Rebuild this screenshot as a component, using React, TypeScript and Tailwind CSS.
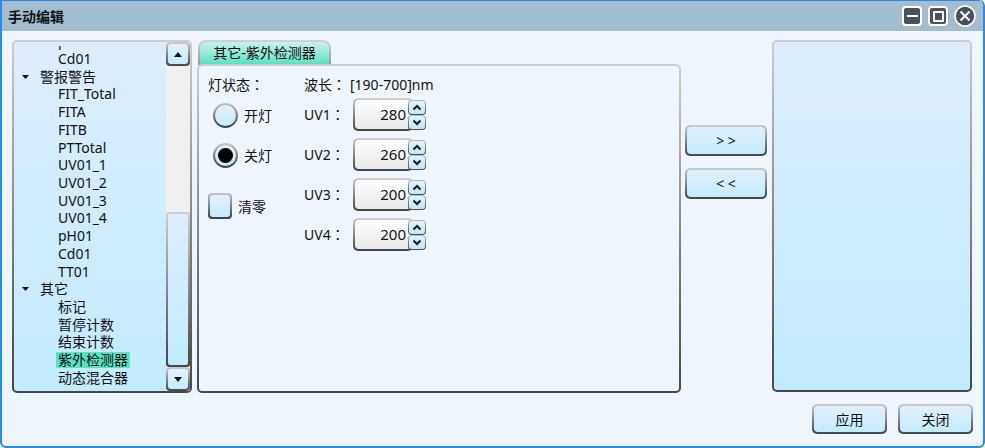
import React from "react";

const FONT = { fontFamily: '"Noto Sans", "Noto Sans CJK SC", sans-serif' };
const CJK = { fontFamily: '"Noto Sans CJK TC", sans-serif' };

const treeItems: { label: string; level: number; selected?: boolean }[] = [
  { label: "pH01", level: 1 },
  { label: "Cd01", level: 1 },
  { label: "警报警告", level: 0 },
  { label: "FIT_Total", level: 1 },
  { label: "FITA", level: 1 },
  { label: "FITB", level: 1 },
  { label: "PTTotal", level: 1 },
  { label: "UV01_1", level: 1 },
  { label: "UV01_2", level: 1 },
  { label: "UV01_3", level: 1 },
  { label: "UV01_4", level: 1 },
  { label: "pH01", level: 1 },
  { label: "Cd01", level: 1 },
  { label: "TT01", level: 1 },
  { label: "其它", level: 0 },
  { label: "标记", level: 1 },
  { label: "暂停计数", level: 1 },
  { label: "结束计数", level: 1 },
  { label: "紫外检测器", level: 1, selected: true },
  { label: "动态混合器", level: 1 },
];

const uvValues = [
  { label: "UV1", value: "280" },
  { label: "UV2", value: "260" },
  { label: "UV3", value: "200" },
  { label: "UV4", value: "200" },
];

// full-width colon, drawn in a face that centres it in its em box
const Colon = () => <span style={CJK}>：</span>;

const Caret = ({ down }: { down?: boolean }) => (
  <svg width="8" height="5" viewBox="0 0 8 5">
    {down ? (
      <path d="M0 0 L8 0 L4 5 Z" fill="#111" />
    ) : (
      <path d="M0 5 L8 5 L4 0 Z" fill="#111" />
    )}
  </svg>
);

const Chevron = ({ down }: { down?: boolean }) => (
  <svg width="10" height="7" viewBox="0 0 10 7">
    <path
      d={down ? "M1.5 1.5 L5 5 L8.5 1.5" : "M1.5 5.5 L5 2 L8.5 5.5"}
      stroke="#1a1a1a"
      strokeWidth="2"
      fill="none"
    />
  </svg>
);

const ScrollButton = ({ down }: { down?: boolean }) => (
  <div className="h-[24px] w-full rounded-[4px] bg-linear-to-b from-[#cfcfcf] to-[#474747] p-[2px]">
    <div className="flex h-full w-full items-center justify-center rounded-[3px] bg-linear-to-b from-[#e4f1fd] to-[#c3ecfe]">
      <Caret down={down} />
    </div>
  </div>
);

const SpinButton = ({ down }: { down?: boolean }) => (
  <div className="h-[15px] w-[18px] rounded-[4px] bg-linear-to-b from-[#bdbdbd] to-[#4a4a4a] p-[1px]">
    <div className="flex h-full w-full items-center justify-center rounded-[3px] bg-linear-to-b from-[#e2f0fd] to-[#bfe9fe]">
      <Chevron down={down} />
    </div>
  </div>
);

const Spinner = ({ value }: { value: string }) => (
  <div className="flex h-[33px] items-center">
    <div className="h-[33px] w-[60px] rounded-[5px] bg-linear-to-b from-[#d2d2d2] to-[#444] p-[2px]">
      <div className="flex h-full w-full items-center justify-end rounded-[4px] bg-linear-to-b from-white to-[#e9e9e9] pr-[5px] text-[15px] leading-none text-[#111]">
        {value}
      </div>
    </div>
    <div className="relative -ml-[5px] flex flex-col">
      <SpinButton />
      <SpinButton down />
    </div>
  </div>
);

const BlueButton = ({
  children,
  className,
}: {
  children: React.ReactNode;
  className: string;
}) => (
  <div
    className={`rounded-[5px] bg-linear-to-b from-[#cdcdcd] to-[#454545] p-[2px] ${className}`}
  >
    <div className="flex h-full w-full items-center justify-center rounded-[4px] bg-linear-to-b from-[#e2f0fd] to-[#c2ecfe] text-[14px] text-[#111]">
      {children}
    </div>
  </div>
);

const Radio = ({ checked, label }: { checked?: boolean; label: string }) => (
  <div className="flex h-[25px] items-center">
    <div className="ml-[5px] h-[25px] w-[25px] rounded-full bg-linear-to-b from-[#c8c8c8] to-[#3e3e3e] p-[2px]">
      <div className="flex h-full w-full items-center justify-center rounded-full bg-linear-to-b from-[#e4f1fd] to-[#c3ecfe]">
        {checked && <div className="h-[15px] w-[15px] rounded-full bg-black" />}
      </div>
    </div>
    <span className="ml-[6px] text-[14px]">{label}</span>
  </div>
);

export default function App() {
  return (
    <div
      style={FONT}
      className="flex h-[448px] w-[985px] flex-col overflow-hidden rounded-b-[6px] rounded-tr-[6px] border-x-[2px] border-b-[2px] border-t-[1px] border-[#2a8ae6] bg-[#eef5fd] text-[#111]"
    >
      {/* Title bar */}
      <div className="flex h-[30px] shrink-0 items-center bg-[#a2bdcd] pl-[6px] pr-[7px]">
        <span className="text-[14px] font-bold">手动编辑</span>
        <div className="ml-auto flex items-center gap-[6px]">
          <div className="flex h-[20px] w-[20px] items-center justify-center rounded-[4px] border-[2px] border-white bg-[#4b505f]">
            <div className="h-[2px] w-[11px] bg-white" />
          </div>
          <div className="flex h-[20px] w-[20px] items-center justify-center rounded-[4px] border-[2px] border-white bg-[#4b505f]">
            <div className="h-[11px] w-[11px] border-[2px] border-white" />
          </div>
          <svg width="22" height="22" viewBox="0 0 22 22">
            <circle cx="11" cy="11" r="10" fill="#4b505f" stroke="#fff" strokeWidth="1.6" />
            <path d="M6.5 6.5 L15.5 15.5 M15.5 6.5 L6.5 15.5" stroke="#fff" strokeWidth="2" />
          </svg>
        </div>
      </div>

      {/* Body */}
      <div className="flex flex-1 flex-col pl-[10px] pr-[9px] pt-[9px]">
        <div className="flex h-[353px]">
          {/* Tree panel */}
          <div className="h-full w-[180px] shrink-0 rounded-[5px] bg-linear-to-b from-[#cfcfcf] to-[#474747] p-[2px]">
            <div className="flex h-full w-full overflow-hidden rounded-[3px] bg-linear-to-b from-[#deedfd] to-[#c1ecfe]">
              <div className="flex-1 pt-[4px]">
                <div className="h-full overflow-hidden">
                  <div className="-mt-[13.6px]">
                    {treeItems.map((item, i) => (
                      <div
                        key={i}
                        className={`flex h-[17.72px] items-center text-[14px] leading-none ${
                          item.level === 0 ? "pl-[8px]" : "pl-[42px]"
                        }`}
                      >
                        {item.level === 0 && (
                          <span className="mr-[9px] flex w-[7px] items-center">
                            <svg width="7" height="4" viewBox="0 0 7 4">
                              <path d="M0 0 L7 0 L3.5 4 Z" fill="#111" />
                            </svg>
                          </span>
                        )}
                        <span
                          className={`px-[2px] py-[1px] ${item.selected ? "bg-[#5ae2c2]" : ""}`}
                        >
                          {item.label}
                        </span>
                      </div>
                    ))}
                  </div>
                </div>
              </div>
              {/* Scrollbar */}
              <div className="flex w-[24px] flex-col bg-[#f0f0f0]">
                <ScrollButton />
                <div className="flex flex-1 flex-col">
                  <div className="h-[146px]" />
                  <div className="flex-1 rounded-[3px] bg-linear-to-b from-[#cfcfcf] to-[#474747] p-[2px]">
                    <div className="h-full w-full rounded-[2px] bg-linear-to-b from-[#deedfd] to-[#c1ecfe]" />
                  </div>
                </div>
                <ScrollButton down />
              </div>
            </div>
          </div>

          {/* Tab area */}
          <div className="ml-[5px] flex w-[484px] shrink-0 flex-col">
            <div className="flex h-[24px] pl-[1px]">
              <div className="h-[25px] w-[133px] rounded-t-[8px] bg-linear-to-b from-[#d2d2d2] to-[#9a9a9a] px-[2px] pt-[2px]">
                <div className="flex h-full w-full items-center justify-center rounded-t-[6px] bg-linear-to-b from-[#c6f3ea] to-[#4fe0c0] pb-[2px] text-[14px]">
                  其它-紫外检测器
                </div>
              </div>
            </div>
            <div className="relative flex-1 rounded-[5px] bg-linear-to-b from-[#cfcfcf] to-[#474747] p-[2px]">
              <div className="flex h-full w-full rounded-[3px] bg-[#eef5fd] pl-[9px] pt-[9px] text-[14px]">
                <div className="flex w-[96px] flex-col">
                  <div className="flex h-[18px] items-center">
                    灯状态<Colon />
                  </div>
                  <div className="mt-[10px]">
                    <Radio label="开灯" />
                  </div>
                  <div className="mt-[15px]">
                    <Radio checked label="关灯" />
                  </div>
                  <div className="mt-[25px] flex items-center">
                    <div className="h-[26px] w-[24px] rounded-[4px] bg-linear-to-b from-[#c8c8c8] to-[#3e3e3e] p-[2px]">
                      <div className="h-full w-full rounded-[3px] bg-linear-to-b from-[#e4f1fd] to-[#c3ecfe]" />
                    </div>
                    <span className="ml-[6px]">清零</span>
                  </div>
                </div>
                <div className="flex flex-col">
                  <div className="flex h-[18px] items-center">
                    波长<Colon />
                    <span className="ml-[4px]">[190-700]nm</span>
                  </div>
                  <div className="mt-[5px] flex flex-col gap-[7px]">
                    {uvValues.map((uv) => (
                      <div key={uv.label} className="flex items-center">
                        <span className="w-[49px]">
                          {uv.label}
                          <Colon />
                        </span>
                        <Spinner value={uv.value} />
                      </div>
                    ))}
                  </div>
                </div>
              </div>
            </div>
          </div>

          {/* Move buttons */}
          <div className="ml-[4px] flex w-[82px] shrink-0 flex-col gap-[12px] pt-[85px]">
            <BlueButton className="h-[31px] w-[82px]">{"> >"}</BlueButton>
            <BlueButton className="h-[31px] w-[82px]">{"< <"}</BlueButton>
          </div>

          {/* Right panel */}
          <div className="ml-[5px] h-[352px] w-[200px] shrink-0 rounded-[5px] bg-linear-to-b from-[#cfcfcf] to-[#474747] p-[2px]">
            <div className="h-full w-full rounded-[3px] bg-linear-to-b from-[#deedfd] to-[#c1ecfe]" />
          </div>
        </div>

        {/* Bottom buttons */}
        <div className="mt-[11px] flex justify-end gap-[11px] pr-[1px]">
          <BlueButton className="h-[30px] w-[75px]">应用</BlueButton>
          <BlueButton className="h-[30px] w-[75px]">关闭</BlueButton>
        </div>
      </div>
    </div>
  );
}
